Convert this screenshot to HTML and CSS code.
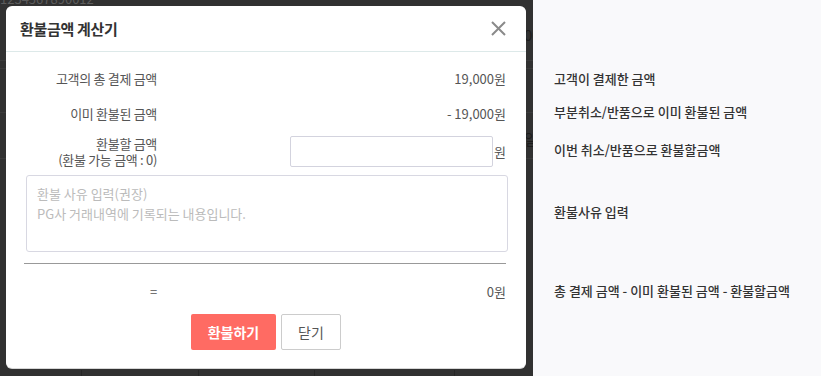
FILE: index.html
```html
<!doctype html>
<html>
<head>
    <meta charset="utf-8">
    <title>환불금액 계산기</title>
    <link rel="stylesheet" href="styles.css">
</head>
<body>
<div class="page">
    <div class="stage">
        <div class="backdrop">
            <div class="bg-top">
                <div class="bg-id">1234567890012</div>
                <div class="bg-side">00</div>
            </div>
            <div class="bg-row h7"></div>
            <div class="bg-row h43"></div>
            <div class="bg-row h45"><div class="bg-side">일</div></div>
            <div class="bg-fill"></div>
            <div class="bg-cells">
                <div class="c1"></div><div class="c2"></div><div class="c3"></div><div class="c4"></div><div class="c5"></div>
            </div>
        </div>

        <div class="modal">
            <div class="modal-head">
                <h2>환불금액 계산기</h2>
                <svg class="close" width="15" height="15" viewBox="0 0 15 15">
                    <path d="M1 1L14 14M14 1L1 14" stroke="#8a8a8a" stroke-width="2" fill="none"/>
                </svg>
            </div>
            <div class="modal-body">
                <div class="row">
                    <div class="label">고객의 총 결제 금액</div>
                    <div class="value">19,000원</div>
                </div>
                <div class="row">
                    <div class="label">이미 환불된 금액</div>
                    <div class="value">- 19,000원</div>
                </div>
                <div class="row row-input">
                    <div class="label">환불할 금액<br>(환불 가능 금액 : 0)</div>
                    <div class="value">
                        <input type="text" class="amount">
                        <span>원</span>
                    </div>
                </div>
                <textarea class="reason" placeholder="환불 사유 입력(권장)&#10;PG사 거래내역에 기록되는 내용입니다."></textarea>
                <div class="divider"></div>
                <div class="row row-result">
                    <div class="label">=</div>
                    <div class="value">0원</div>
                </div>
                <div class="btns">
                    <button class="btn btn-refund">환불하기</button>
                    <button class="btn btn-close">닫기</button>
                </div>
            </div>
        </div>
    </div>

    <div class="guide">
        <p class="g1">고객이 결제한 금액</p>
        <p class="g2">부분취소/반품으로 이미 환불된 금액</p>
        <p class="g3">이번 취소/반품으로 환불할금액</p>
        <p class="g4">환불사유 입력</p>
        <p class="g5">총 결제 금액 - 이미 환불된 금액 - 환불할금액</p>
    </div>
</div>
</body>
</html>
```

FILE: styles.css
```css
*{
    margin:0;
    padding:0;
    box-sizing:border-box;
}
body{
    font-family:"Noto Sans CJK KR", "Noto Sans", sans-serif;
    color:#333;
    overflow:hidden;
}
.page{
    display:flex;
    width:821px;
    height:376px;
}

/* dimmed page behind the modal */
.stage{
    width:533px;
    height:376px;
    display:grid;
    background:#313131;
    overflow:hidden;
}
.backdrop,
.modal{
    grid-area:1 / 1;
}
.backdrop{
    display:flex;
    flex-direction:column;
}
.bg-top{
    height:61px;
    border-bottom:1px solid #3b3b3b;
}
.bg-id{
    font-size:13px;
    line-height:13px;
    margin-top:-8px;
    color:#5c5c5c;
}
.bg-side{
    padding-left:524px;
    font-size:15px;
    color:#1d1d1d;
    white-space:nowrap;
}
.bg-top .bg-side{
    margin-top:19px;
}
.bg-row{
    border-bottom:1px solid #3b3b3b;
}
.h7{ height:8px; }
.h43{ height:44px; }
.h45{ height:46px; padding-top:15px; }
.bg-fill{
    height:211px;
}
.bg-cells{
    display:flex;
    height:6px;
}
.bg-cells div{
    border-right:1px solid #262626;
}
.c1{ width:82px; }
.c2{ width:117px; }
.c3{ width:116px; }
.c4{ width:140px; }
.c5{ width:78px; border-right:0 !important; }

/* modal */
.modal{
    align-self:start;
    justify-self:start;
    margin:6px 0 0 6px;
    width:520px;
    background:#fff;
    border-radius:6px;
    box-shadow:0 1px 0 #d6d6d6;
}
.modal-head{
    height:46px;
    display:flex;
    align-items:center;
    justify-content:space-between;
    padding:0 20px 0 14px;
    border-bottom:1px solid #dde9e9;
}
.modal-head h2{
    font-size:15px;
    font-weight:700;
    color:#333;
    letter-spacing:-0.3px;
}
.close{
    margin-top:-1px;
}
.modal-body{
    padding:9px 20px 18px 0;
    font-size:13px;
    color:#555;
}
.row{
    display:grid;
    grid-template-columns:151px 1fr;
    align-items:center;
    height:35px;
}
.label{
    text-align:right;
    letter-spacing:-0.3px;
}
.value{
    text-align:right;
}
.row-input{
    height:33px;
    margin-top:4px;
    line-height:16px;
}
.row-input .value{
    display:flex;
    justify-content:flex-end;
    align-items:center;
    gap:1px;
}
.amount{
    width:203px;
    height:31px;
    border:1px solid #d3d3de;
    border-radius:2px;
    outline:none;
}
.reason{
    display:block;
    margin:7px -2px 0 20px;
    width:482px;
    height:77px;
    border:1px solid #d8d8e2;
    border-radius:3px;
    padding:8px 10px;
    font-family:inherit;
    font-size:13px;
    line-height:20px;
    resize:none;
    outline:none;
}
.reason::placeholder{
    color:#bbb;
}
.divider{
    margin:11px 0 0 18px;
    border-top:1px solid #999;
}
.row-result{
    height:30px;
    margin-top:12px;
}
.btns{
    display:flex;
    justify-content:center;
    gap:5px;
    margin-top:8px;
    padding-left:20px;
}
.btn{
    height:36px;
    font-family:inherit;
    font-size:14px;
    border-radius:2px;
}
.btn-refund{
    width:85px;
    background:#ff6b63;
    border:0;
    color:#fff;
    font-weight:700;
}
.btn-close{
    width:60px;
    background:#fff;
    border:1px solid #ccc;
    color:#555;
}

/* help text column */
.guide{
    flex:1;
    background:#f9f9fb;
    padding:69px 0 0 21px;
    font-size:13px;
    font-weight:500;
    line-height:20px;
    color:#333;
}
.g2{ margin-top:13px; }
.g3{ margin-top:18px; }
.g4{ margin-top:42px; }
.g5{ margin-top:59px; }
```
